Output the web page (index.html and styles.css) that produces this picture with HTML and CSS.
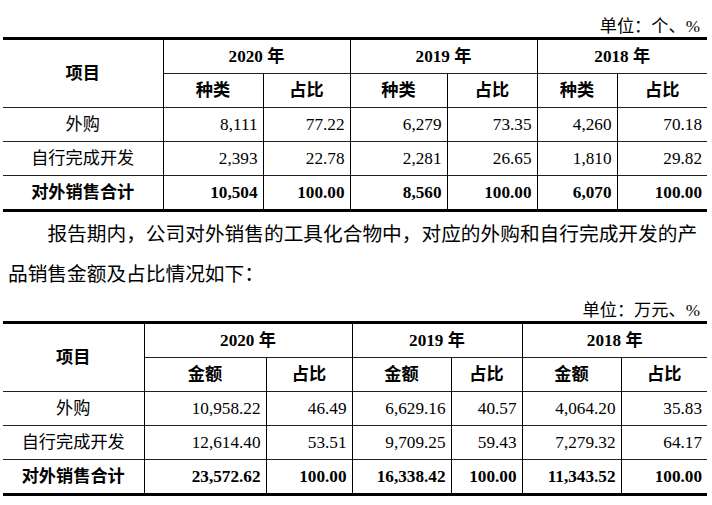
FILE: index.html
```html
<!DOCTYPE html>
<html lang="zh-CN">
<head>
<meta charset="utf-8">
<title>工具化合物销售情况</title>
<link rel="stylesheet" href="styles.css">
</head>
<body>
<div class="page">
  <div class="unit">单位：个、%</div>
  <table class="tbl">
    <colgroup>
      <col class="c-a1"><col class="c-a2"><col class="c-a3"><col class="c-a4"><col class="c-a5"><col class="c-a6"><col class="c-a7">
    </colgroup>
    <tr>
      <th rowspan="2" class="bb">项目</th>
      <th colspan="2" class="vl">2020 年</th>
      <th colspan="2" class="vl">2019 年</th>
      <th colspan="2" class="vl">2018 年</th>
    </tr>
    <tr>
      <th class="vl">种类</th><th class="vl">占比</th>
      <th class="vl">种类</th><th class="vl">占比</th>
      <th class="vl">种类</th><th class="vl">占比</th>
    </tr>
    <tr>
      <td class="name">外购</td>
      <td class="num vl">8,111</td><td class="num vl">77.22</td>
      <td class="num vl">6,279</td><td class="num vl">73.35</td>
      <td class="num vl">4,260</td><td class="num vl">70.18</td>
    </tr>
    <tr>
      <td class="name">自行完成开发</td>
      <td class="num vl">2,393</td><td class="num vl">22.78</td>
      <td class="num vl">2,281</td><td class="num vl">26.65</td>
      <td class="num vl">1,810</td><td class="num vl">29.82</td>
    </tr>
    <tr class="total">
      <td class="name">对外销售合计</td>
      <td class="num vl">10,504</td><td class="num vl">100.00</td>
      <td class="num vl">8,560</td><td class="num vl">100.00</td>
      <td class="num vl">6,070</td><td class="num vl">100.00</td>
    </tr>
  </table>

  <p class="para">报告期内，公司对外销售的工具化合物中，对应的外购和自行完成开发的产品销售金额及占比情况如下：</p>

  <div class="unit">单位：万元、%</div>
  <table class="tbl">
    <colgroup>
      <col class="c-b1"><col class="c-b2"><col class="c-b3"><col class="c-b4"><col class="c-b5"><col class="c-b6"><col class="c-b7">
    </colgroup>
    <tr>
      <th rowspan="2" class="bb">项目</th>
      <th colspan="2" class="vl">2020 年</th>
      <th colspan="2" class="vl">2019 年</th>
      <th colspan="2" class="vl">2018 年</th>
    </tr>
    <tr>
      <th class="vl">金额</th><th class="vl">占比</th>
      <th class="vl">金额</th><th class="vl">占比</th>
      <th class="vl">金额</th><th class="vl">占比</th>
    </tr>
    <tr>
      <td class="name">外购</td>
      <td class="num vl">10,958.22</td><td class="num vl">46.49</td>
      <td class="num vl">6,629.16</td><td class="num vl">40.57</td>
      <td class="num vl">4,064.20</td><td class="num vl">35.83</td>
    </tr>
    <tr>
      <td class="name">自行完成开发</td>
      <td class="num vl">12,614.40</td><td class="num vl">53.51</td>
      <td class="num vl">9,709.25</td><td class="num vl">59.43</td>
      <td class="num vl">7,279.32</td><td class="num vl">64.17</td>
    </tr>
    <tr class="total">
      <td class="name">对外销售合计</td>
      <td class="num vl">23,572.62</td><td class="num vl">100.00</td>
      <td class="num vl">16,338.42</td><td class="num vl">100.00</td>
      <td class="num vl">11,343.52</td><td class="num vl">100.00</td>
    </tr>
  </table>
</div>
</body>
</html>
```

FILE: styles.css
```css
html, body {
  margin: 0;
  padding: 0;
  background: #fff;
}

body {
  font-family: "Liberation Serif", "Noto Sans CJK SC", serif;
  color: #000;
}

.page {
  width: 704px;
  padding: 17px 5px 0 3px;
}

.unit {
  text-align: right;
  padding-right: 7px;
  font-size: 17.2px;
  line-height: 20px;
  height: 20px;
}

.tbl {
  width: 704px;
  table-layout: fixed;
  border-collapse: collapse;
  border-top: 3px solid #000;
  border-bottom: 3px solid #000;
  font-size: 17.2px;
}

.c-a1 { width: 160px; }
.c-a2 { width: 100px; }
.c-a3 { width: 87px; }
.c-a4 { width: 97px; }
.c-a5 { width: 90px; }
.c-a6 { width: 80px; }
.c-a7 { width: 90px; }

.c-b1 { width: 141px; }
.c-b2 { width: 122px; }
.c-b3 { width: 86px; }
.c-b4 { width: 99px; }
.c-b5 { width: 71px; }
.c-b6 { width: 99px; }
.c-b7 { width: 86px; }

.tbl th,
.tbl td {
  height: 33px;
  padding: 0 5px;
  border-top: 1px solid #222;
  line-height: 20px;
  white-space: nowrap;
  overflow: hidden;
}

.tbl tr:first-child th {
  border-top: none;
}

.tbl th {
  font-weight: bold;
  text-align: center;
}

.tbl .vl {
  border-left: 1px solid #000;
}

.tbl .name {
  text-align: center;
}

.tbl .num {
  text-align: right;
}

.tbl .total td {
  font-weight: bold;
}

.para {
  margin: 2px 0 7px 5px;
  width: 696px;
  font-size: 19.7px;
  line-height: 40px;
  text-indent: 2em;
}
```
